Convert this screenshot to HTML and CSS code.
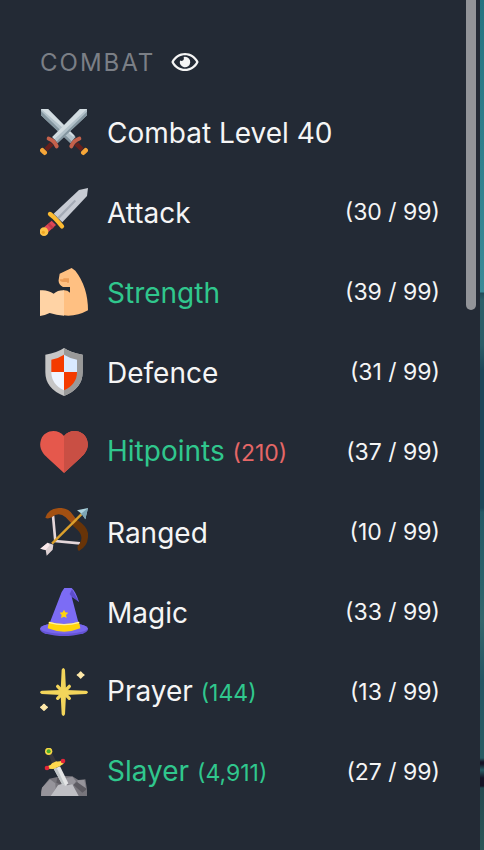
FILE: index.html
```html
<!DOCTYPE html>
<html lang="en">
<head>
<meta charset="utf-8">
<title>Combat skills</title>
<link rel="stylesheet" href="styles.css">
</head>
<body>
<div class="app">
  <nav class="sidebar">
    <header class="heading">
      <h2 class="heading-title">COMBAT</h2>
      <button class="toggle" type="button" aria-label="Toggle combat skills">
        <svg class="eye" viewBox="0 0 576 512"><path fill="currentColor" d="M288 144a110.940 110.940 0 0 0-31.240 5 55.400 55.400 0 0 1 7.240 27 56 56 0 0 1-56 56 55.400 55.400 0 0 1-27-7.240A111.710 111.710 0 1 0 288 144zm284.520 97.400C518.290 135.590 410.930 64 288 64S57.680 135.640 3.480 241.410a32.350 32.350 0 0 0 0 29.190C57.710 376.410 165.070 448 288 448s230.320-71.640 284.520-177.410a32.350 32.350 0 0 0 0-29.190zM288 400c-98.650 0-189.090-55-237.930-144C98.910 167 189.340 112 288 112s189.090 55 237.930 144C477.100 345 386.660 400 288 400z"/></svg>
      </button>
    </header>
    <ul class="skills">
      <li class="skill">
        <svg class="icon" viewBox="30 30 144 144">
          <path fill="#b2c1c9" d="M33 33h21l83 84-16 18-88-83z"/><path fill="#8496a0" d="M33 52V39l92 91-4 5z"/><path fill="#d2dce1" d="M33 33h21l80 80-5 3z"/>
          <path fill="#67201d" d="M133 142l11-9 17 17-9 10zM71 142l-11-9-17 17 9 10z"/>
          <path fill="#b2c1c9" d="M171 33h-21l-83 84 16 18 88-83z"/><path fill="#8496a0" d="M171 52V41L79 131l4 4z"/><path fill="#d2dce1" d="M171 33h-21l-83 84 6 7z"/>
          <g fill="none" stroke="#c5614b" stroke-width="12" stroke-linecap="round"><path d="M56 122q17 6 24 23M148 122q-17 6-24 23"/></g>
          <g fill="none" stroke="#f6a638" stroke-width="14" stroke-linecap="round"><path d="M37 157l7 7M167 157l-7 7"/></g>
        </svg>
        <span class="name">Combat Level 40</span>
      </li>
      <li class="skill">
        <svg class="icon" viewBox="30 30 144 144">
          <path fill="#c7cbd3" d="M174 30l-3 24-74 79-26-26 76-71z"/><path fill="#a5abb5" d="M134 65l4 5-51 53-5-5z"/>
          <path fill="#dc4655" d="M65 128l13 13-23 21-13-14z"/><path fill="#bd3b48" d="M58 135l13 13-5 5-13-13z"/>
          <path fill="none" stroke="#fdbb31" stroke-width="13" stroke-linecap="round" d="M60 108l12 10 14 15 10 12"/><circle cx="42" cy="161" r="13" fill="#fdc347"/><circle cx="40" cy="163" r="5" fill="#f0a624"/>
        </svg>
        <span class="name">Attack</span><span class="level">(30 / 99)</span>
      </li>
      <li class="skill">
        <svg class="icon" viewBox="30 30 144 144">
          <path fill="#ffc082" d="M100 97q12-1 20 7V87H99q-15-9-13-22l3-18 36-17 11 8q38 49 38 119-36 20-74 15z"/>
          <path fill="#ffd3a5" d="M30 97q22-3 41 10 13-11 31-10v76q-23-1-43-8-15 7-29 9z"/><path fill="#ed9d58" d="M89 64l11 0v-3h17v13h-6v-2h-12q-9 0-10-8z"/>
        </svg>
        <span class="name up">Strength</span><span class="level">(39 / 99)</span>
      </li>
      <li class="skill">
        <svg class="icon" viewBox="30 30 144 144">
          <path fill="#c6c6c6" d="M102 30q20 14 56 20v53q0 49-56 71-56-22-56-71V50q36-6 56-20z"/><path fill="#999" d="M102 30q20 14 56 20v53q0 49-56 71z"/>
          <path fill="#f43b00" d="M102 50v52H64V65q22-4 38-15zM102 102h39q0 37-39 55z"/><path fill="#d9e9ff" d="M102 50q17 11 39 15v37h-39z"/><path fill="#eef5ff" d="M64 102h38v55q-38-18-38-55z"/>
        </svg>
        <span class="name">Defence</span><span class="level">(31 / 99)</span>
      </li>
      <li class="skill">
        <svg class="icon" viewBox="30 30 144 144">
          <path fill="#e5584c" d="M102 54C83 31 44 35 33 65c-8 25 5 42 20 55l49 45 49-45c15-13 28-30 20-55-11-30-50-34-69-11z"/><path fill="#c94f44" d="M102 54c19-23 58-19 69 11 8 25-5 42-20 55l-49 45z"/>
        </svg>
        <span class="name with-bonus up">Hitpoints <small class="bonus down">(210)</small></span><span class="level">(37 / 99)</span>
      </li>
      <li class="skill">
        <svg class="icon" viewBox="30 30 144 144">
          <path fill="none" stroke="#e5d7da" stroke-width="8" d="M69 53l7 76 74 7"/>
          <path fill="#a35012" d="M46 59q9-27 40-29 29-2 43 21l14 18-13 13-23-24Q86 39 65 58q-12 6-19 1z"/><path fill="#683408" d="M143 67q36 23 31 51-2 28-27 41-6-3-4-15 23-25-1-49l-15-13z"/>
          <path fill="none" stroke="#dba02c" stroke-width="7" d="M66 137l91-91"/><path fill="#aed4df" d="M174 30l-33 7 11 8 6 7 8 12z"/><path fill="#7da6b5" d="M174 30l-23 19 7 3 8 12z"/>
          <path fill="#ded1d3" d="M31 152l22-18 17 6-2 15-18 18-3-17z"/><path fill="#fae9eb" d="M31 152l22-18 6 8-12 14z"/>
        </svg>
        <span class="name">Ranged</span><span class="level">(10 / 99)</span>
      </li>
      <li class="skill">
        <svg class="icon" viewBox="30 30 144 144">
          <ellipse cx="102" cy="154" rx="72" ry="20" fill="#6554d5"/><ellipse cx="102" cy="151" rx="71" ry="16" fill="#7867ed"/>
          <path fill="#7c6cf5" d="M57 140l38-98 8-12h22q12 10 22 42-11-12-22-16l22 84q-42 20-90 0z"/><path fill="#5d4dcc" d="M126 34l21 38-22-16-6-8z"/>
          <path fill="#ffd40c" d="M57 131q45 14 90 0l4 20q-48 20-98 0z"/><path fill="#fff0a5" d="M57 131q45 14 90 0l1 4q-45 14-92 0z"/><path fill="#ffd40c" d="M102 95l4 8 9 1-7 7 2 9-8-4-9 4 2-9-6-7 9-1z"/>
        </svg>
        <span class="name">Magic</span><span class="level">(33 / 99)</span>
      </li>
      <li class="skill">
        <svg class="icon" viewBox="30 30 144 144">
          <path fill="none" stroke="#f3d55b" stroke-width="10" stroke-linecap="round" d="M83 85l35 36M118 85l-35 36"/><path fill="#f3d55b" d="M95 35q5-10 10 0l3 61 61 2q10 5 0 10l-61 3-3 58q-5 10-10 0l-3-58-57-3q-10-5 0-10l57-2z"/>
          <path fill="#ffe9a9" stroke="#ffe9a9" stroke-width="4" stroke-linejoin="round" d="M152 42l5 5 5 4-5 4-5 5-5-5-5-4 5-4zM42 139l5 5 5 4-5 4-5 5-5-5-5-4 5-4z"/>
        </svg>
        <span class="name with-bonus">Prayer <small class="bonus up">(144)</small></span><span class="level">(13 / 99)</span>
      </li>
      <li class="skill">
        <svg class="icon" viewBox="30 30 144 144">
          <path fill="#77757c" d="M33 174q-1-14 3-25l22-27 24-5 24-3 21 1 18 11 21-2 5 30v20z"/><path fill="#96949b" d="M36 149l24-25 16 12 1 15-13 23H33zM109 120l18-4 11 14-8 12-20-3zM142 127l21-1 5 27-25-11z"/><path fill="#5d5b62" d="M82 117l17 2-2 23-18-8zM130 140l11-8 30 21-14 11z"/>
          <path fill="#bfbfc4" d="M62 174l22-32 13-5 16 5 14-3 19 35z"/>
          <path fill="#e3e4e5" d="M71 92l19-7 25 51-8 7-11-5z"/><path fill="#c0c5c7" d="M71 92l9-3 25 53-9-4z"/><path fill="#38373d" d="M56 51l10-5 13 25-12 6z"/>
          <circle cx="56" cy="40" r="11" fill="#f5d445"/><circle cx="56" cy="40" r="6" fill="#48ae2c"/><path fill="#ffd84d" d="M52 85q10-1 14-9l13-6q8 2 18-4l4 11-12 8-19 8-16-1z"/><circle cx="51" cy="90" r="7" fill="#e32639"/><circle cx="99" cy="69" r="7" fill="#e32639"/>
        </svg>
        <span class="name with-bonus up">Slayer <small class="bonus up">(4,911)</small></span><span class="level">(27 / 99)</span>
      </li>
    </ul>
    <div class="scroll-thumb"></div>
  </nav>
  <main class="scene"></main>
</div>
</body>
</html>
```
FILE: styles.css
```css
* {
  box-sizing: border-box;
}

body {
  margin: 0;
  background: #232a35;
  color: #f5f5f5;
  font-family: Inter, "Liberation Sans", sans-serif;
  font-weight: 400;
}

.app {
  display: flex;
  min-height: 100vh;
}

.sidebar {
  position: relative;
  flex: 1;
  padding: 44px 40px 48px;
}

.heading {
  display: flex;
  align-items: center;
  gap: 16px;
  height: 36px;
  margin-bottom: 28px;
}

.heading-title {
  margin: 0;
  color: #7b7f86;
  font-size: 24px;
  font-weight: 400;
  letter-spacing: 2px;
}

.toggle {
  display: flex;
  padding: 0;
  border: 0;
  background: none;
  color: #f5f5f5;
}

.eye {
  width: 28px;
  height: 24px;
}

.skills {
  display: grid;
  gap: 32px;
  margin: 0;
  padding: 0;
  list-style: none;
}

.skill {
  display: flex;
  align-items: center;
  height: 48px;
}

.icon {
  flex: none;
  width: 48px;
  height: 48px;
  margin-right: 19px;
}

.name {
  flex: 1;
  padding-top: 2px;
  font-size: 28px;
  line-height: 40px;
  white-space: nowrap;
}

.with-bonus {
  padding-top: 0;
}

.bonus,
.level {
  font-size: 23px;
}

.level {
  line-height: 40px;
}

.up {
  color: #30c78d;
}

.down {
  color: #e56767;
}

.scroll-thumb {
  position: absolute;
  top: 0;
  right: 4px;
  width: 10px;
  height: 310px;
  border-radius: 0 0 5px 5px;
  background: #929499;
}

.scene {
  width: 4px;
  background: linear-gradient(#257481 0, #3a8b98 292px, #204c59 293px, #2b5f69 300px, #2b5c67 345px, #1c4658 370px, #1c4658 508px, #245965 512px, #2b626b 585px, #34666c 620px, #245563 680px, #285c63 758px, #151426 762px, #151426 764px, #285c63 770px, #151426 778px, #151426 786px, #24494f 788px, #2a5657 850px);
}
```
